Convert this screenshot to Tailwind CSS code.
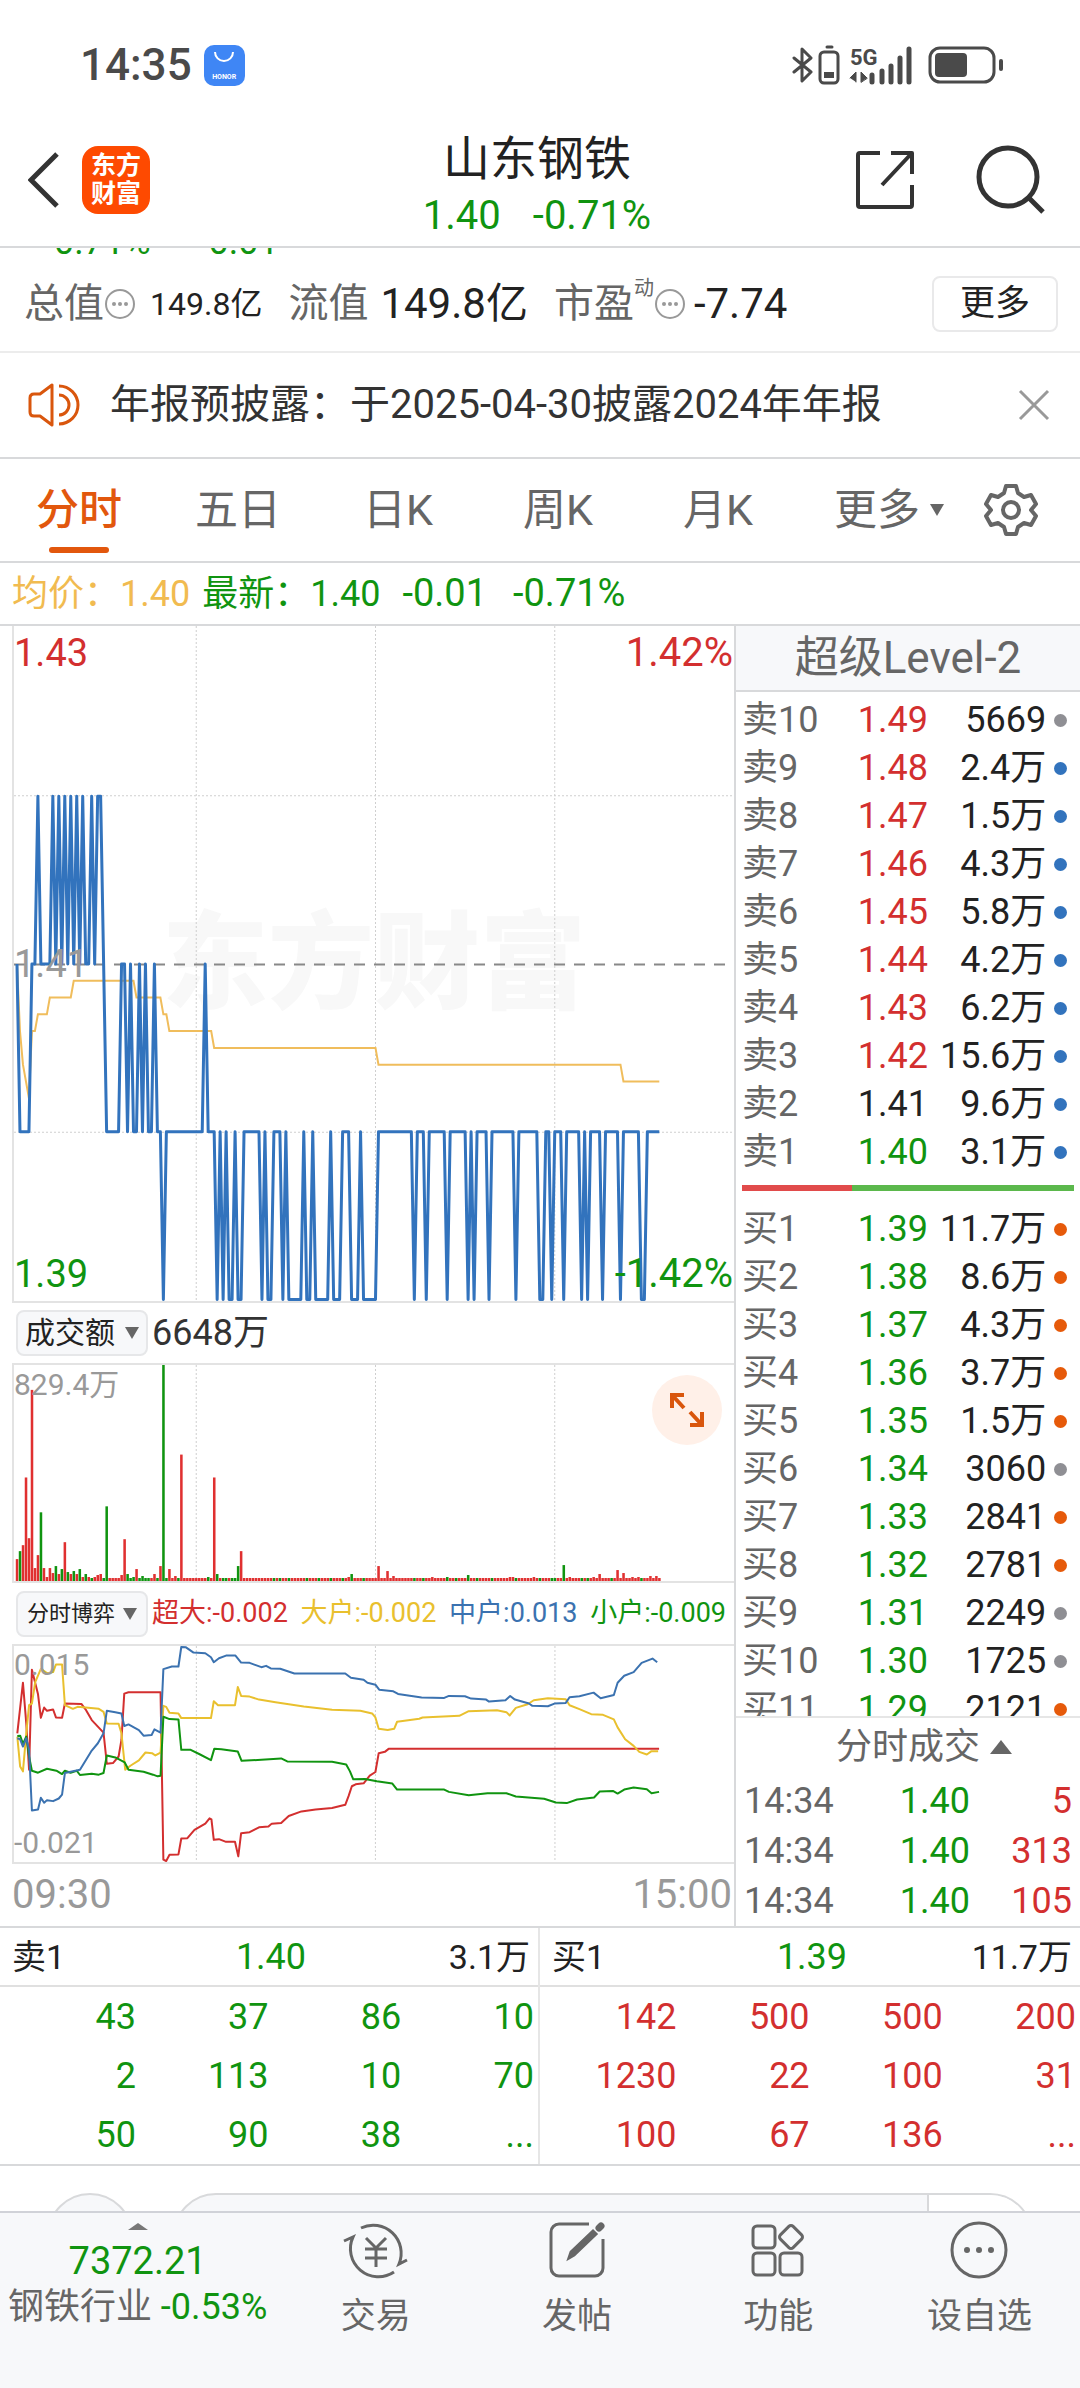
<!DOCTYPE html>
<html lang="zh-CN">
<head>
    <meta charset="UTF-8">
    <meta name="viewport" content="width=device-width, initial-scale=1.0">
    <title>山东钢铁 1.40 -0.71%</title>
    <script src="https://cdn.jsdelivr.net/npm/@tailwindcss/browser@4"></script>
</head>
<body class="bg-white text-[#222] font-['Roboto','Noto_Sans_CJK_SC',sans-serif] overflow-x-hidden">
    <!-- Status bar -->
    <div class="h-[130px] pl-20 pr-[76px] flex items-center justify-between text-[#4a4a4a]">
        <div class="flex items-center gap-3">
            <span class="text-[44px] leading-none font-medium">14:35</span>
            <span class="w-[41px] h-[41px] rounded-[10px] bg-[#3f86f5] text-white flex flex-col items-center justify-between pt-[6px] pb-[5px]">
                <svg class="w-5 h-3" viewBox="0 0 20 12" fill="none" stroke="currentColor" stroke-width="2"><path d="M1 1a9 9 0 0 0 18 0"/></svg>
                <span class="text-[7px] leading-none font-bold">HONOR</span>
            </span>
        </div>
        <svg class="w-[212px] h-10" viewBox="0 0 212 40" fill="none" stroke="currentColor" stroke-width="4" stroke-linecap="round" stroke-linejoin="round">
            <path d="M2 13l17 14-9 9V4l9 9L2 27" stroke-width="3"/>
            <path d="M35 2h5" stroke-width="3"/>
            <rect x="28" y="7" width="18" height="31" rx="4" stroke-width="3"/>
            <path d="M32 27h10v6H32z" fill="currentColor" stroke="none"/>
            <text x="58" y="20" font-size="22" font-weight="700" fill="currentColor" stroke="none">5G</text>
            <path d="M58 33l6-6v10M69 37V27l6 6z" fill="currentColor" stroke-width="1"/>
            <path d="M80 30v7M90 26v11M99 21v16M108 13v24M117 4v33" stroke-width="5"/>
            <rect x="138" y="3" width="64" height="34" rx="10" stroke-width="3"/>
            <rect x="143" y="8" width="32" height="24" rx="4" fill="currentColor" stroke="none"/>
            <path d="M209 16v8"/>
        </svg>
    </div>

    <!-- Header -->
    <header class="h-[118px] px-7 flex items-center justify-between border-b-2 border-[#d8d9db]">
        <div class="flex-1 flex items-center gap-[22px] pb-4">
            <button aria-label="返回"><svg class="w-8 h-14 block" viewBox="0 0 32 56" fill="none" stroke="#333" stroke-width="5"><path d="M29 2L3 28l26 26"/></svg></button>
            <a href="#" class="w-[68px] h-[68px] rounded-2xl bg-[#fe4a01] text-white text-[25px] leading-7 font-bold flex items-center justify-center text-center">东方<br>财富</a>
        </div>
        <div class="text-center pb-1">
            <h1 class="text-[47px] leading-[60px]">山东钢铁</h1>
            <div class="text-[40px] leading-[54px] text-[#109410] flex justify-center gap-8"><span>1.40</span><span>-0.71%</span></div>
        </div>
        <div class="flex-1 flex items-center justify-end gap-[60px] pb-4 pr-[6px]">
            <button aria-label="分享"><svg class="w-[60px] h-[60px] block" viewBox="0 0 60 60" fill="none" stroke="#333" stroke-width="4" stroke-linejoin="round"><path d="M24 3H4a2 2 0 0 0-2 2v50a2 2 0 0 0 2 2h50a2 2 0 0 0 2-2V35M35 3h21v21M55 4L26 35"/></svg></button>
            <button aria-label="搜索"><svg class="w-[70px] h-[70px] block" viewBox="0 0 70 70" fill="none" stroke="#333" stroke-width="5"><circle cx="32" cy="32" r="29"/><path d="M53 53l14 14"/></svg></button>
        </div>
    </header>

    <!-- Key figures -->
    <section class="relative h-[105px] pt-2 pl-6 pr-[22px] flex items-center border-b-2 border-[#ececec] overflow-hidden">
        <div class="absolute left-11 -top-[27px] flex gap-12 text-[36px] leading-[42px] text-[#109410]"><span>-0.71%</span><span>-0.01</span></div>
        <div class="flex items-center mr-[26px]">
            <span class="text-[40px] text-[#666]">总值</span>
            <svg class="w-8 h-8 mr-[14px]" viewBox="0 0 32 32" fill="#999"><circle cx="16" cy="16" r="14" fill="none" stroke="#999" stroke-width="2"/><circle cx="10" cy="16" r="2"/><circle cx="16" cy="16" r="2"/><circle cx="22" cy="16" r="2"/></svg>
            <span class="text-[32px]">149.8亿</span>
        </div>
        <div class="flex items-center gap-3 mr-[26px]">
            <span class="text-[40px] text-[#666]">流值</span>
            <span class="text-[42px]">149.8亿</span>
        </div>
        <div class="flex items-center">
            <span class="text-[40px] text-[#666]">市盈</span>
            <span class="text-[20px] text-[#666] pb-8">动</span>
            <svg class="w-8 h-8 mr-2" viewBox="0 0 32 32" fill="#999"><circle cx="16" cy="16" r="14" fill="none" stroke="#999" stroke-width="2"/><circle cx="10" cy="16" r="2"/><circle cx="16" cy="16" r="2"/><circle cx="22" cy="16" r="2"/></svg>
            <span class="text-[42px]">-7.74</span>
        </div>
        <button class="ml-auto w-[126px] h-14 text-[35px] leading-none border-2 border-[#e9e9ea] rounded-lg">更多</button>
    </section>

    <!-- Notice -->
    <section class="h-[106px] pl-7 pr-[30px] flex items-center border-b-2 border-[#d8d9db]">
        <svg class="w-[54px] h-11 mr-[28px]" viewBox="0 0 54 44" fill="none" stroke="#d9560d" stroke-width="3" stroke-linejoin="round"><path d="M2 15q0-4 4-4h6L24 2v40L12 33H6q-4 0-4-4zM31 3a19 19 0 0 1 0 38M31 12a10 10 0 0 1 0 20"/></svg>
        <p class="text-[40px] text-[#333]">年报预披露：于2025-04-30披露2024年年报</p>
        <button class="ml-auto" aria-label="关闭"><svg class="w-8 h-8" viewBox="0 0 32 32" stroke="#999" stroke-width="3"><path d="M2 2l28 28M30 2L2 30"/></svg></button>
    </section>

    <!-- Period tabs -->
    <nav class="h-[104px] grid grid-cols-[158fr_160fr_160fr_160fr_160fr_182fr_100fr] items-center text-[43px] text-[#666] border-b-2 border-[#d8d9db]">
        <button class="relative h-full text-[#e2570d] font-medium">分时<span class="absolute left-1/2 -translate-x-1/2 bottom-2 w-[60px] h-[6px] rounded-full bg-[#e2570d]"></span></button>
        <button>五日</button>
        <button>日K</button>
        <button>周K</button>
        <button>月K</button>
        <button class="flex items-center justify-center gap-[10px]">更多<svg class="w-[14px] h-3" viewBox="0 0 14 12" fill="#666"><path d="M0 0h14L7 12z"/></svg></button>
        <button class="pl-1" aria-label="设置"><svg class="w-[54px] h-[54px]" viewBox="0 0 54 54" fill="none" stroke="#666" stroke-width="4" stroke-linejoin="round"><path d="M22 3h10l2 7 6 4 7-2 5 9-5 6 5 6-5 9-7-2-6 4-2 7H22l-2-7-6-4-7 2-5-9 5-6-5-6 5-9 7 2 6-4z"/><circle cx="27" cy="27" r="8"/></svg></button>
    </nav>

    <div class="h-[63px] pl-3 flex items-center text-[36px] text-[#109410] border-b-2 border-[#d8d9db]">
        <span class="text-[#f1bb50]">均价：1.40</span>
        <span class="ml-3">最新：1.40</span>
        <span class="ml-[22px] text-[38px]">-0.01</span>
        <span class="ml-[26px] text-[38px]">-0.71%</span>
    </div>

    <main class="grid grid-cols-[734fr_346fr] border-b-2 border-[#d8d9db]">
        <!-- Charts -->
        <section class="pl-3">
            <div class="relative border-l-2 border-b-2 border-[#e3e3e3]">
                <div class="absolute inset-0 flex items-center justify-center text-[106px] leading-none font-black text-[#f8f8f8]">东方财富</div>
                <svg class="relative block w-full h-[675px]" viewBox="0 0 241 676" preserveAspectRatio="none" fill="none">
                    <g stroke="#cfcfcf" stroke-dasharray="2 2"><path d="M61 0v676M121 0v676M181 0v676M0 170h241M0 507h241" vector-effect="non-scaling-stroke"/></g>
                    <path d="M0 339h241" stroke="#888" stroke-width="2" stroke-dasharray="11 9" vector-effect="non-scaling-stroke"/>
                    <polyline id="avg" stroke="#f0bd5c" stroke-width="2" vector-effect="non-scaling-stroke"/>
                    <polyline id="price" stroke="#3273bd" stroke-width="3" stroke-linejoin="round" vector-effect="non-scaling-stroke"/>
                </svg>
                <div class="absolute inset-0 pr-px text-[38px] leading-[54px] flex flex-col justify-between">
                    <div class="flex justify-between text-[#d32f2f]"><span>1.43</span><span class="text-[40px]">1.42%</span></div>
                    <div class="text-[#999]">1.41</div>
                    <div class="flex justify-between text-[#109410]"><span>1.39</span><span class="text-[40px]">-1.42%</span></div>
                </div>
            </div>

            <div class="h-[60px] pl-1 flex items-center gap-1">
                <button class="w-[132px] h-[46px] flex items-center justify-center gap-[10px] text-[30px] leading-none bg-[#f7f8fa] border-2 border-[#e6e7e9] rounded-lg">成交额<svg class="w-[14px] h-3" viewBox="0 0 14 12" fill="#666"><path d="M0 0h14L7 12z"/></svg></button>
                <span class="text-[36px] leading-none text-[#333]">6648万</span>
            </div>

            <div class="relative border-2 border-r-0 border-[#e3e3e3]">
                <svg class="block w-full h-[216px]" viewBox="0 0 241 217" preserveAspectRatio="none" fill="none">
                    <path d="M61 0v217M121 0v217M181 0v217" stroke="#cfcfcf" stroke-dasharray="2 2" vector-effect="non-scaling-stroke"/>
                    <g id="volume"></g>
                </svg>
                <span class="absolute left-0 top-0 text-[30px] leading-[40px] text-[#999]">829.4万</span>
                <button class="absolute right-3 top-[10px] w-[70px] h-[70px] rounded-full bg-[#fff0e8] flex items-center justify-center" aria-label="全屏"><svg class="w-9 h-9" viewBox="0 0 36 36" fill="none" stroke="#d9560d" stroke-width="4"><path d="M3 16V3h12M3 3l12 13M21 33h12V20M33 33L21 20"/></svg></button>
            </div>

            <div class="h-[61px] pl-1 pr-2 flex items-center gap-1">
                <button class="w-[132px] h-[46px] flex items-center justify-center gap-2 text-[22px] leading-none bg-[#f7f8fa] border-2 border-[#e6e7e9] rounded-lg">分时博弈<svg class="w-[14px] h-3" viewBox="0 0 14 12" fill="#666"><path d="M0 0h14L7 12z"/></svg></button>
                <div class="flex-1 flex justify-between text-[27px] leading-none whitespace-nowrap">
                    <span class="text-[#d32f2f]">超大:-0.002</span>
                    <span class="text-[#e9c02e]">大户:-0.002</span>
                    <span class="text-[#3b72b0]">中户:0.013</span>
                    <span class="text-[#109410]">小户:-0.009</span>
                </div>
            </div>

            <div class="relative border-2 border-r-0 border-[#e3e3e3]">
                <svg class="block w-full h-[216px]" viewBox="25 166 1528 653" preserveAspectRatio="none" fill="none" stroke-width="2" stroke-linejoin="round">
                    <path d="M412 166v653M792 166v653M1173 166v653" stroke="#cfcfcf" stroke-width="1" stroke-dasharray="2 2" vector-effect="non-scaling-stroke"/>
                    <polyline stroke="#d32f2f" vector-effect="non-scaling-stroke" points="32,430 44,277 51,400 57,540 63,238 76,312 82,383 89,352 95,362 108,358 114,382 127,383 133,340 168,341 178,360 190,390 215,428 222,522 235,520 247,500 253,450 259,310 268,306 336,306 342,812 348,816 355,797 374,796 380,748 393,747 408,722 431,703 440,687 444,690 449,752 460,750 475,758 494,758 501,802 507,732 525,729 545,714 565,712 572,703 592,701 608,680 635,666 665,660 700,656 728,646 735,620 742,590 750,584 767,581 780,558 792,547 799,490 812,486 820,477 1394,477"/>
                    <polyline stroke="#e9c02e" vector-effect="non-scaling-stroke" points="32,440 38,530 44,545 51,430 57,345 63,340 70,275 82,235 95,248 108,245 114,222 127,222 133,345 150,356 160,350 205,356 215,365 222,400 247,401 253,430 261,540 272,528 290,512 304,488 318,490 325,497 336,488 342,347 348,350 355,368 374,370 380,384 443,384 449,333 458,345 494,345 500,290 507,317 525,319 545,328 580,336 640,349 700,359 760,362 785,370 792,382 799,416 818,420 832,416 838,395 885,386 892,382 970,377 990,363 1050,360 1070,366 1077,376 1090,353 1115,342 1128,330 1158,324 1196,327 1204,345 1225,357 1250,372 1275,374 1298,388 1306,412 1322,448 1340,468 1352,486 1368,494 1378,484 1392,484"/>
                    <polyline stroke="#109410" vector-effect="non-scaling-stroke" points="32,438 38,437 44,462 51,440 57,500 63,543 76,549 95,537 115,543 127,553 133,543 145,549 158,543 165,556 190,552 205,555 215,550 222,497 240,503 260,518 268,540 300,546 320,555 330,560 336,558 342,380 355,387 374,388 380,480 400,480 420,494 443,511 450,477 465,478 500,485 508,513 550,510 592,506 605,515 700,516 730,524 738,545 745,569 770,568 795,575 828,582 838,600 938,600 948,607 990,617 1030,611 1070,611 1090,621 1150,628 1175,639 1198,641 1220,630 1256,624 1268,606 1296,604 1306,612 1320,600 1340,594 1368,599 1378,611 1394,607"/>
                    <polyline stroke="#3b72b0" vector-effect="non-scaling-stroke" points="32,445 38,448 44,470 51,445 57,480 63,663 76,660 82,625 89,640 95,632 108,635 120,627 127,615 133,550 165,540 190,482 203,460 215,430 222,362 240,366 253,370 259,408 268,403 290,420 300,437 317,435 323,418 336,428 342,236 360,228 374,228 380,169 390,170 406,186 431,188 443,200 449,215 460,203 475,195 495,195 507,216 525,217 550,230 560,226 570,234 590,235 620,249 728,249 740,262 767,268 775,277 792,283 800,298 830,303 840,311 890,322 938,323 948,317 982,318 995,325 1027,328 1033,334 1068,330 1078,317 1088,328 1118,340 1125,347 1158,348 1172,340 1196,338 1204,321 1225,318 1255,307 1270,324 1298,314 1306,277 1320,256 1340,245 1357,217 1380,204 1390,215"/>
                </svg>
                <div class="absolute inset-0 text-[30px] leading-[38px] text-[#999] flex flex-col justify-between"><span>0.015</span><span>-0.021</span></div>
            </div>
            <div class="h-[62px] flex items-center justify-between pr-[2px] text-[40px] leading-none text-[#999]"><span>09:30</span><span>15:00</span></div>
        </section>

        <!-- Order book -->
        <aside class="border-l-2 border-[#d8d9db]">
            <h2 class="h-[66px] flex items-center justify-center text-[44px] leading-none text-[#666] bg-[#f7f8fa] border-b-2 border-[#d8d9db]">超级Level-2</h2>
            <div class="h-[1024px] pt-1 pl-[6px] overflow-hidden text-[36px] leading-none">
                <table class="w-full table-fixed"><tbody id="asks"></tbody></table>
                <div class="my-[9px] mr-[6px] h-[6px] flex bg-[#5bb84c]"><div class="bg-[#e14b4b]" style="width:33%"></div></div>
                <table class="w-full table-fixed mt-[14px]"><tbody id="bids"></tbody></table>
            </div>
            <button class="w-full h-[60px] pl-8 flex items-center justify-center gap-[10px] text-[36px] leading-none text-[#666] border-t-2 border-[#e6e6e6]">分时成交<svg class="w-[22px] h-[14px]" viewBox="0 0 22 14" fill="#666"><path d="M11 0l11 14H0z"/></svg></button>
            <table class="w-full table-fixed text-[36px] leading-none">
                <tbody>
                    <tr class="h-[50px]"><td class="w-[38%] pl-2 text-[#666]">14:34</td><td class="w-[30%] text-right text-[#109410]">1.40</td><td class="w-[32%] pr-2 text-right text-[#d32f2f]">5</td></tr>
                    <tr class="h-[50px]"><td class="pl-2 text-[#666]">14:34</td><td class="text-right text-[#109410]">1.40</td><td class="pr-2 text-right text-[#d32f2f]">313</td></tr>
                    <tr class="h-[50px]"><td class="pl-2 text-[#666]">14:34</td><td class="text-right text-[#109410]">1.40</td><td class="pr-2 text-right text-[#d32f2f]">105</td></tr>
                </tbody>
            </table>
        </aside>
    </main>

    <!-- Level 1 queues -->
    <section class="grid grid-cols-2 text-[36px] leading-none border-b-2 border-[#d8d9db]">
        <div class="border-r-2 border-[#e6e6e6]">
            <div class="h-[59px] pl-3 pr-2 grid grid-cols-3 items-center border-b-2 border-[#e0e0e0]"><span class="text-[34px]">卖1</span><span class="text-center text-[#109410]">1.40</span><span class="text-right text-[34px]">3.1万</span></div>
            <table class="w-full table-fixed text-right text-[#109410]">
                <tbody>
                    <tr class="h-[59px]"><td class="w-[26%] pr-1">43</td><td class="pr-1">37</td><td class="pr-1">86</td><td class="pr-1">10</td></tr>
                    <tr class="h-[59px]"><td class="pr-1">2</td><td class="pr-1">113</td><td class="pr-1">10</td><td class="pr-1">70</td></tr>
                    <tr class="h-[59px]"><td class="pr-1">50</td><td class="pr-1">90</td><td class="pr-1">38</td><td class="pr-1">...</td></tr>
                </tbody>
            </table>
        </div>
        <div>
            <div class="h-[59px] pl-3 pr-2 grid grid-cols-3 items-center border-b-2 border-[#e0e0e0]"><span class="text-[34px]">买1</span><span class="text-center text-[#109410]">1.39</span><span class="text-right text-[34px]">11.7万</span></div>
            <table class="w-full table-fixed text-right text-[#d32f2f]">
                <tbody>
                    <tr class="h-[59px]"><td class="w-[26%] pr-1">142</td><td class="pr-1">500</td><td class="pr-1">500</td><td class="pr-1">200</td></tr>
                    <tr class="h-[59px]"><td class="pr-1">1230</td><td class="pr-1">22</td><td class="pr-1">100</td><td class="pr-1">31</td></tr>
                    <tr class="h-[59px]"><td class="pr-1">100</td><td class="pr-1">67</td><td class="pr-1">136</td><td class="pr-1">...</td></tr>
                </tbody>
            </table>
        </div>
    </section>

    <!-- Index strip, mostly hidden under the toolbar -->
    <div class="h-[45px] pt-[27px] pl-[47px] pr-[47px] flex gap-10 overflow-hidden">
        <div class="shrink-0 w-[86px] h-[86px] rounded-full bg-[#f7f8fa] border-2 border-[#d8d9db]"></div>
        <div class="flex-1 h-[86px] rounded-full border-2 border-[#d8d9db] bg-[#f7f8fa] flex justify-end overflow-hidden"><div class="w-[104px] bg-white border-l-2 border-[#d8d9db]"></div></div>
    </div>

    <!-- Toolbar -->
    <footer class="h-[177px] grid grid-cols-[275fr_201fr_201fr_201fr_201fr] bg-[#f7f8fa] border-t-2 border-[#d0d2d8] text-[#666]">
        <a href="#" class="pt-[10px] flex flex-col items-center">
            <svg class="w-5 h-[7px]" viewBox="0 0 20 7" fill="#777"><path d="M10 0l10 7H0z"/></svg>
            <span class="mt-2 text-[38px] leading-[46px] text-[#109410]">7372.21</span>
            <span class="text-[36px] leading-[46px] whitespace-nowrap">钢铁行业 <span class="text-[#109410]">-0.53%</span></span>
        </a>
        <button class="pt-[6px] flex flex-col items-center">
            <svg class="w-[66px] h-[60px]" viewBox="0 0 66 60" fill="none" stroke="currentColor" stroke-width="3"><path d="M18 9a28 28 0 0 1 38 36l8-4M51 53A28 28 0 0 1 10 18l-9 4"/><path d="M23 19l10 10 10-10M22 30h22M22 39h22M33 29v19"/></svg>
            <span class="mt-[13px] text-[35px] leading-[50px]">交易</span>
        </button>
        <button class="pt-[6px] flex flex-col items-center">
            <svg class="w-[60px] h-[60px]" viewBox="0 0 60 60" fill="none" stroke="currentColor" stroke-width="3"><path d="M42 5H12a8 8 0 0 0-8 8v36a8 8 0 0 0 8 8h36a8 8 0 0 0 8-8V20"/><path d="M46 12l3 3-22 21-5 3 2-6z" fill="currentColor"/><path d="M52 9l2-2" stroke-width="7" stroke-linecap="round"/></svg>
            <span class="mt-[13px] text-[35px] leading-[50px]">发帖</span>
        </button>
        <button class="pt-[6px] flex flex-col items-center">
            <svg class="w-[60px] h-[60px]" viewBox="0 0 60 60" fill="none" stroke="currentColor" stroke-width="3"><rect x="5" y="7" width="22" height="22" rx="4"/><rect x="5" y="34" width="22" height="22" rx="4"/><rect x="32" y="34" width="22" height="22" rx="4"/><rect x="34" y="9" width="18" height="18" rx="3" transform="rotate(45 43 18)"/></svg>
            <span class="mt-[13px] text-[35px] leading-[50px]">功能</span>
        </button>
        <button class="pt-[6px] flex flex-col items-center">
            <svg class="w-[60px] h-[60px]" viewBox="0 0 60 60" fill="currentColor"><circle cx="30" cy="31" r="27" fill="none" stroke="currentColor" stroke-width="3"/><circle cx="18" cy="31" r="3"/><circle cx="30" cy="31" r="3"/><circle cx="42" cy="31" r="3"/></svg>
            <span class="mt-[13px] text-[35px] leading-[50px]">设自选</span>
        </button>
    </footer>

    <script>
        const RED = 'text-[#d32f2f]', GREEN = 'text-[#109410]', BLACK = 'text-[#222]';
        const BLUE_DOT = 'bg-[#3273bd]', ORANGE_DOT = 'bg-[#e65a0a]', GREY_DOT = 'bg-[#8f8f94]';

        // label, price, volume, price colour, dot
        const asks = [
            ['卖10', '1.49', '5669', RED, GREY_DOT], ['卖9', '1.48', '2.4万', RED, BLUE_DOT],
            ['卖8', '1.47', '1.5万', RED, BLUE_DOT], ['卖7', '1.46', '4.3万', RED, BLUE_DOT],
            ['卖6', '1.45', '5.8万', RED, BLUE_DOT], ['卖5', '1.44', '4.2万', RED, BLUE_DOT],
            ['卖4', '1.43', '6.2万', RED, BLUE_DOT], ['卖3', '1.42', '15.6万', RED, BLUE_DOT],
            ['卖2', '1.41', '9.6万', BLACK, BLUE_DOT], ['卖1', '1.40', '3.1万', GREEN, BLUE_DOT]
        ];
        const bids = [
            ['买1', '1.39', '11.7万', GREEN, ORANGE_DOT], ['买2', '1.38', '8.6万', GREEN, ORANGE_DOT],
            ['买3', '1.37', '4.3万', GREEN, ORANGE_DOT], ['买4', '1.36', '3.7万', GREEN, ORANGE_DOT],
            ['买5', '1.35', '1.5万', GREEN, ORANGE_DOT], ['买6', '1.34', '3060', GREEN, GREY_DOT],
            ['买7', '1.33', '2841', GREEN, ORANGE_DOT], ['买8', '1.32', '2781', GREEN, ORANGE_DOT],
            ['买9', '1.31', '2249', GREEN, GREY_DOT], ['买10', '1.30', '1725', GREEN, GREY_DOT],
            ['买11', '1.29', '2121', GREEN, ORANGE_DOT]
        ];
        function renderBook(id, rows) {
            document.getElementById(id).innerHTML = rows.map(([label, price, vol, color, dot]) => `
                <tr class="h-12">
                    <td class="w-[31%] text-[#666]">${label}</td>
                    <td class="w-[24%] text-right ${color}">${price}</td>
                    <td class="w-[35%] text-right whitespace-nowrap">${vol}</td>
                    <td class="w-[10%] pl-2"><div class="w-[13px] h-[13px] rounded-full ${dot}"></div></td>
                </tr>`).join('');
        }
        renderBook('asks', asks);
        renderBook('bids', bids);

        // minute:price in cents, only where the line turns
        const price = '0:141 1:140 4:140 5:141 6:141 7:142 8:141 11:141 12:142 13:141 14:142 15:141 16:142 17:141 18:142 19:141 20:142 21:141 22:142 23:141 24:141 25:142 26:141 27:142 28:142 29:141 30:140 34:140 35:141 36:141 37:140 38:141 39:140 40:140 41:141 42:140 43:141 44:140 45:140 46:141 47:140 48:140 49:139 50:140 62:140 63:141 64:140 66:140 67:139 68:140 69:139 70:140 71:139 72:139 73:140 74:139 75:139 76:140 81:140 82:139 83:140 84:139 85:139 86:140 88:140 89:139 90:140 91:139 95:139 96:140 97:139 98:139 99:140 100:139 104:139 105:140 106:139 108:139 109:140 111:140 112:139 114:139 115:140 116:139 120:139 121:140 132:140 133:139 134:140 136:140 137:139 138:140 143:140 144:139 145:140 150:140 151:139 152:140 153:139 154:140 157:140 158:139 159:140 166:140 167:139 168:140 174:140 175:139 176:139 177:140 178:140 179:139 180:140 182:140 183:139 184:140 188:140 189:139 190:140 191:139 192:140 195:140 196:139 197:140 201:140 202:139 203:140 208:140 209:139 210:139 211:140 215:140';
        const avg = '0:141 1:140.6 2:140.4 3:140.3 4:140.2 5:140.6 6:140.6 7:140.7 10:140.7 11:140.8 18:140.8 19:140.9 39:140.9 40:140.8 48:140.8 49:140.7 50:140.7 51:140.6 65:140.6 66:140.5 120:140.5 121:140.4 202:140.4 203:140.3 215:140.3';
        function drawLine(id, data) {
            const points = data.split(' ').map(p => {
                const [m, v] = p.split(':').map(Number);
                return (m + 1) + ',' + (338.5 + (141 - v) * 168);
            });
            document.getElementById(id).setAttribute('points', points.join(' '));
        }
        drawLine('avg', avg);
        drawLine('price', price);

        // minute -> bar height, negative = falling minute
        const volume = {
            0: 22, 1: -30, 2: 36, 3: 104, 4: 43, 5: 192, 6: 13, 7: 26, 8: -69, 9: 13, 10: 4, 11: 13, 12: 8, 13: -15, 14: 7, 15: -12, 16: 39,
            17: -9, 18: 7, 19: -10, 20: 7, 21: -12, 22: 4, 23: -7, 24: 4, 25: -3, 26: 4, 27: 6, 28: 7, 29: -3, 30: -75, 35: 6, 36: 42, 37: -7,
            38: -3, 39: -4, 40: 12, 41: -3, 42: -5, 43: -3, 44: -3, 46: 7, 47: -3, 48: 15, 49: -217, 50: -3, 51: 12, 53: 5, 54: -3, 55: 127,
            64: -4, 66: 104, 67: -7, 69: -3, 70: -3, 72: -3, 73: -3, 74: -15, 75: 30, 86: -3, 88: -3, 91: -3, 97: -3, 101: -3, 105: -3,
            109: -3, 111: 4, 112: -7, 116: -3, 121: 15, 124: 10, 126: 5, 133: -3, 136: -3, 139: 4, 144: -4, 147: -3, 151: -6, 154: -3,
            159: -3, 165: 4, 166: 4, 167: -3, 173: 4, 175: -3, 179: -3, 180: -3, 183: -16, 185: 4, 189: -3, 191: -3, 193: 4, 195: 7,
            199: -3, 201: 11, 203: 8, 206: 4, 208: 4, 209: -3, 212: 5, 214: 5
        };
        let bars = '';
        for (let m = 0; m <= 215; m++) {
            const v = volume[m] || 3;
            const h = Math.abs(v);
            bars += `<rect x="${m + 0.6}" y="${217 - h}" width="0.85" height="${h}" fill="${v < 0 ? '#109410' : '#e03030'}"/>`;
        }
        document.getElementById('volume').innerHTML = bars;
    </script>
</body>
</html>
